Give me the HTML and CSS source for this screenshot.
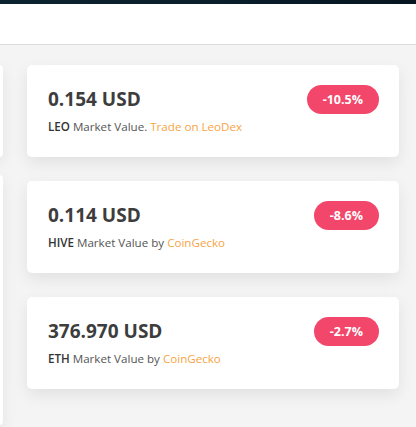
FILE: index.html
```html
<!DOCTYPE html>
<html>
<head>
<meta charset="utf-8">
<link rel="stylesheet" href="styles.css">
</head>
<body>
<div class="topbar"></div>
<header class="header"></header>
<main class="main">
  <aside class="side">
    <div class="side-panel side-short"></div>
    <div class="side-panel side-tall"></div>
  </aside>
  <section class="cards">
    <div class="card">
      <div class="info">
        <div class="price">0.154 USD</div>
        <div class="desc"><span class="sym">LEO</span> Market Value. <a class="link">Trade on LeoDex</a></div>
      </div>
      <span class="badge">-10.5%</span>
    </div>
    <div class="card">
      <div class="info">
        <div class="price">0.114 USD</div>
        <div class="desc"><span class="sym">HIVE</span> Market Value by <a class="link">CoinGecko</a></div>
      </div>
      <span class="badge">-8.6%</span>
    </div>
    <div class="card">
      <div class="info">
        <div class="price">376.970 USD</div>
        <div class="desc"><span class="sym">ETH</span> Market Value by <a class="link">CoinGecko</a></div>
      </div>
      <span class="badge">-2.7%</span>
    </div>
  </section>
</main>
</body>
</html>
```
FILE: styles.css
```css
* { box-sizing: border-box; }
html, body { margin: 0; padding: 0; }
body {
  background: #f4f4f4;
  font-family: "Open Sans", "Noto Sans", sans-serif;
  width: 416px;
  height: 427px;
  overflow: hidden;
}
.topbar {
  height: 4px;
  background: linear-gradient(90deg, #0c2330, #0a1e2b 50%, #061522);
}
.header {
  height: 41px;
  background: #fff;
  border-bottom: 1px solid #dcdcdc;
}
.main {
  display: flex;
  gap: 24px;
  padding-top: 20px;
  margin-left: -297px;
}
.side {
  width: 300px;
  flex: none;
  display: flex;
  flex-direction: column;
  gap: 18px;
}
.side-panel {
  background: #fff;
  border-radius: 4px;
  box-shadow: 0 5px 15px rgba(0,0,0,0.07);
}
.side-short { height: 92px; }
.side-tall { height: 250px; }
.cards {
  width: 372px;
  flex: none;
  display: flex;
  flex-direction: column;
  gap: 24px;
}
.card {
  height: 92px;
  background: #fff;
  border-radius: 5px;
  box-shadow: 0 6px 16px rgba(0,0,0,0.08);
  padding: 20px 20px 20px 21px;
  display: flex;
  justify-content: space-between;
  align-items: flex-start;
}
.info { padding-top: 1px; }
.price {
  font-size: 19px;
  font-weight: 700;
  color: #3d3d3d;
  line-height: 26px;
}
.desc {
  margin-top: 7px;
  font-size: 11.6px;
  line-height: 16px;
  color: #555;
}
.sym { font-weight: 600; color: #333; }
.link { color: #f7a446; text-decoration: none; }
.badge {
  height: 29px;
  line-height: 29px;
  padding: 0 16px;
  border-radius: 15px;
  background: #f2476b;
  color: #fff;
  font-size: 12.5px;
  font-weight: 700;
}
```
